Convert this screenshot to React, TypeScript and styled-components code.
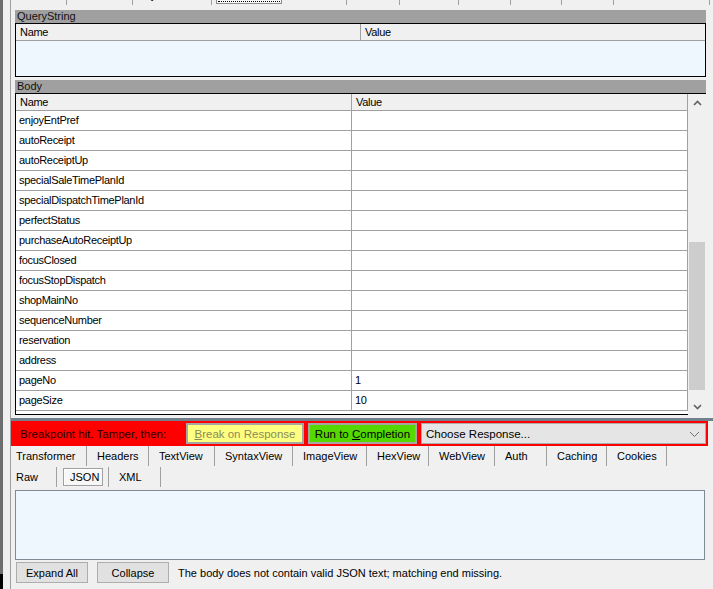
import React from 'react';
import styled, { createGlobalStyle } from 'styled-components';

const GlobalStyle = createGlobalStyle`
  html, body {
    margin: 0;
    padding: 0;
    background: #f0f0f0;
  }

  body {
    font-family: "Liberation Sans", Arial, sans-serif;
    font-size: 11px;
    color: #000;
  }
`;

type Tab = { label: string; width: number; selected?: boolean; first?: boolean };

const topTabs: Tab[] = [
  { label: 'Headers', width: 56 },
  { label: 'TextView', width: 66 },
  { label: 'SyntaxView', width: 79 },
  { label: 'WebForms', width: 72, selected: true },
  { label: 'HexView', width: 63 },
  { label: 'Auth', width: 53 },
  { label: 'Cookies', width: 59 },
  { label: 'Raw', width: 52 },
  { label: 'JSON', width: 51 },
  { label: 'XML', width: 52 },
  { label: '', width: 96 }
];

const responseTabs: Tab[] = [
  { label: 'Transformer', width: 76, first: true },
  { label: 'Headers', width: 62 },
  { label: 'TextView', width: 66 },
  { label: 'SyntaxView', width: 78 },
  { label: 'ImageView', width: 74 },
  { label: 'HexView', width: 62 },
  { label: 'WebView', width: 66 },
  { label: 'Auth', width: 52 },
  { label: 'Caching', width: 60 },
  { label: 'Cookies', width: 60 }
];

const viewTabs: Tab[] = [
  { label: 'Raw', width: 46, first: true },
  { label: 'JSON', width: 52, selected: true },
  { label: 'XML', width: 52 }
];

const bodyRows: [string, string][] = [
  ['enjoyEntPref', ''],
  ['autoReceipt', ''],
  ['autoReceiptUp', ''],
  ['specialSaleTimePlanId', ''],
  ['specialDispatchTimePlanId', ''],
  ['perfectStatus', ''],
  ['purchaseAutoReceiptUp', ''],
  ['focusClosed', ''],
  ['focusStopDispatch', ''],
  ['shopMainNo', ''],
  ['sequenceNumber', ''],
  ['reservation', ''],
  ['address', ''],
  ['pageNo', '1'],
  ['pageSize', '10']
];

const Frame = styled.div`
  display: flex;
  width: 713px;
  height: 589px;
  overflow: hidden;
  background: #f0f0f0;
`;

const LeftEdge = styled.div`
  display: flex;
  flex: 0 0 11px;
`;

const EdgeBar = styled.div`
  width: 3px;
  background: linear-gradient(#6e6e6e 0 574px, #000 574px);
`;

const EdgeGap = styled.div`
  width: 7px;
  background: #f0f0f0;
`;

const EdgeLine = styled.div`
  width: 1px;
  background: #a0a0a0;
`;

const Main = styled.div`
  display: flex;
  flex-direction: column;
  flex: 1;
  min-width: 0;
`;

const TopStrip = styled.div`
  height: 6px;
  overflow: hidden;
`;

const TopTabRow = styled.div`
  display: flex;
  margin-top: -15px;
`;

const TopTab = styled.div<{ $width: number; $selected?: boolean }>`
  flex: 0 0 ${p => p.$width}px;
  height: 20px;
  box-sizing: border-box;
  display: flex;
  align-items: center;
  justify-content: center;
  border-right: ${p => (p.$selected ? 'none' : '1px solid #a0a0a0')};
  padding: ${p => (p.$selected ? '0 2px 1px 4px' : '0')};
  white-space: nowrap;
`;

const SelectedFace = styled.div`
  flex: 1;
  align-self: stretch;
  display: flex;
  align-items: center;
  justify-content: center;
  border: 1px solid #8c8c8c;
  background: #f8f8f8;
  outline: 1px dotted #000;
  outline-offset: -3px;
`;

const Panel = styled.div`
  display: flex;
  flex-direction: column;
  padding: 4px 7px 0 4px;
`;

const SectionBar = styled.div<{ $gap?: number }>`
  height: 13px;
  line-height: 13px;
  margin-top: ${p => p.$gap ?? 0}px;
  padding-left: 2px;
  background: #a0a0a0;
  color: #111;
`;

const QueryBox = styled.div`
  display: flex;
  flex-direction: column;
  height: 54px;
  box-sizing: border-box;
  border: 1px solid #000;
  background: #eef6fe;
`;

const ColumnHeader = styled.div`
  display: flex;
  height: 17px;
  box-sizing: border-box;
  border-bottom: 1px solid #a0a0a0;
  background: #f0f0f0;
  letter-spacing: -0.3px;
`;

const HeaderCell = styled.div<{ $width?: number }>`
  ${p => (p.$width ? `flex: 0 0 ${p.$width}px; border-right: 1px solid #a0a0a0;` : 'flex: 1;')}
  box-sizing: border-box;
  line-height: 16px;
  padding-left: 4px;
`;

const BodyBox = styled.div`
  display: flex;
  height: 322px;
  box-sizing: border-box;
  border-top: 1px solid #000;
`;

const ListBox = styled.div`
  display: flex;
  flex-direction: column;
  flex: 1;
  border-left: 1px solid #000;
  border-bottom: 1px solid #000;
  background: #fff;
`;

const ListHeader = styled(ColumnHeader)`
  border-right: 1px solid #a0a0a0;
`;

const Row = styled.div`
  display: flex;
  height: 20px;
  box-sizing: border-box;
  border-bottom: 1px solid #a0a0a0;
  border-right: 1px solid #a0a0a0;
  letter-spacing: -0.3px;
`;

const Cell = styled.div<{ $width?: number }>`
  ${p => (p.$width ? `flex: 0 0 ${p.$width}px; border-right: 1px solid #a0a0a0;` : 'flex: 1;')}
  box-sizing: border-box;
  line-height: 19px;
  padding-left: 3px;
  white-space: nowrap;
`;

const ScrollBar = styled.div`
  display: flex;
  flex-direction: column;
  flex: 0 0 18px;
  background: #f0f0f0;
`;

const ScrollArrow = styled.div`
  display: flex;
  align-items: center;
  justify-content: center;
  height: 17px;
  color: #606060;
`;

const ScrollTrack = styled.div`
  display: flex;
  flex-direction: column;
  flex: 1;
  padding: 131px 1px 8px 1px;
`;

const ScrollThumb = styled.div`
  flex: 1;
  background: #cdcdcd;
`;

const Splitter = styled.div`
  height: 3px;
  margin-top: 3px;
  background: #72808e;
`;

const AlertBar = styled.div`
  display: flex;
  align-items: center;
  height: 25px;
  box-sizing: border-box;
  margin-right: 5px;
  padding: 2px 2px 2px 9px;
  background: #ff0000;
  font-size: 11.5px;
`;

const AlertLabel = styled.div`
  flex: 0 0 166px;
  color: #1e0000;
  white-space: nowrap;
`;

const ActionButton = styled.div<{ $fill: string; $muted?: boolean; $width: number }>`
  flex: 0 0 ${p => p.$width}px;
  height: 21px;
  box-sizing: border-box;
  margin-right: 4px;
  display: flex;
  align-items: center;
  justify-content: center;
  border: 2px solid #a6a6a6;
  background: ${p => p.$fill};
  color: ${p => (p.$muted ? '#8a8a5a' : '#000')};
  white-space: nowrap;

  u {
    text-decoration: underline;
  }
`;

const ResponseSelect = styled.div`
  flex: 1;
  height: 21px;
  box-sizing: border-box;
  display: flex;
  align-items: center;
  justify-content: space-between;
  padding: 0 5px 0 4px;
  border: 1px solid #acacac;
  background: #e5e5e5;
  color: #000;

  svg {
    color: #707070;
  }
`;

const TabRow = styled.div<{ $gap?: number }>`
  display: flex;
  height: 20px;
  margin-top: ${p => p.$gap ?? 0}px;
`;

const TabItem = styled.div<{ $width: number; $first?: boolean }>`
  flex: 0 0 ${p => p.$width}px;
  box-sizing: border-box;
  display: flex;
  align-items: center;
  padding-left: ${p => (p.$first ? 5 : 10)}px;
  border-right: 1px solid #a0a0a0;
  white-space: nowrap;
`;

const PressedTab = styled.div<{ $width: number }>`
  flex: 0 0 ${p => p.$width}px;
  box-sizing: border-box;
  display: flex;
  padding: 1px 5px 1px 6px;
  border-right: 1px solid #a0a0a0;
`;

const PressedFace = styled.div`
  flex: 1;
  display: flex;
  align-items: center;
  padding-left: 6px;
  border: 1px solid #a0a0a0;
  box-shadow: inset 1px 1px 0 #fff;
  background: #f7f7f7;
`;

const JsonView = styled.div`
  height: 70px;
  box-sizing: border-box;
  margin: 3px 8px 0 4px;
  border: 1px solid #7f8a96;
  background: #eef6fe;
`;

const Footer = styled.div`
  display: flex;
  align-items: center;
  height: 21px;
  margin: 2px 0 0 5px;
  gap: 9px;
`;

const PushButton = styled.div`
  flex: 0 0 72px;
  height: 21px;
  box-sizing: border-box;
  display: flex;
  align-items: center;
  justify-content: center;
  border: 1px solid #adadad;
  background: #e1e1e1;
`;

const StatusText = styled.div`
  white-space: nowrap;
`;

function Chevron ({ up, thin }: { up?: boolean; thin?: boolean }) {
  const w = thin ? 11 : 9;
  return (
    <svg width={w} height='6' viewBox={`0 0 ${w} 6`}>
      <path
        d={up
          ? `M1 5 L${w / 2} 1.5 L${w - 1} 5`
          : `M1 1 L${w / 2} ${thin ? 5.5 : 4.5} L${w - 1} 1`}
        fill='none'
        stroke='currentColor'
        strokeWidth={thin ? 1 : 1.6}
      />
    </svg>
  );
}

export default function App () {
  return (
    <Frame>
      <GlobalStyle />
      <LeftEdge>
        <EdgeBar />
        <EdgeGap />
        <EdgeLine />
      </LeftEdge>
      <Main>
        <TopStrip>
          <TopTabRow>
            {topTabs.map((t, i) => (
              <TopTab key={i} $width={t.width} $selected={t.selected}>
                {t.selected ? <SelectedFace>{t.label}</SelectedFace> : t.label}
              </TopTab>
            ))}
          </TopTabRow>
        </TopStrip>

        <Panel>
          <SectionBar>QueryString</SectionBar>
          <QueryBox>
            <ColumnHeader>
              <HeaderCell $width={345}>Name</HeaderCell>
              <HeaderCell>Value</HeaderCell>
            </ColumnHeader>
          </QueryBox>

          <SectionBar $gap={3}>Body</SectionBar>
          <BodyBox>
            <ListBox>
              <ListHeader>
                <HeaderCell $width={336}>Name</HeaderCell>
                <HeaderCell>Value</HeaderCell>
              </ListHeader>
              {bodyRows.map(([name, value]) => (
                <Row key={name}>
                  <Cell $width={336}>{name}</Cell>
                  <Cell>{value}</Cell>
                </Row>
              ))}
            </ListBox>
            <ScrollBar>
              <ScrollArrow><Chevron up /></ScrollArrow>
              <ScrollTrack>
                <ScrollThumb />
              </ScrollTrack>
              <ScrollArrow><Chevron /></ScrollArrow>
            </ScrollBar>
          </BodyBox>
        </Panel>

        <Splitter />

        <AlertBar>
          <AlertLabel>Breakpoint hit. Tamper, then:</AlertLabel>
          <ActionButton $fill='#ffff80' $muted $width={118}>
            <span><u>B</u>reak on Response</span>
          </ActionButton>
          <ActionButton $fill='#55d800' $width={109}>
            <span>Run to <u>C</u>ompletion</span>
          </ActionButton>
          <ResponseSelect>
            <span>Choose Response...</span>
            <Chevron thin />
          </ResponseSelect>
        </AlertBar>

        <TabRow>
          {responseTabs.map(t => (
            <TabItem key={t.label} $width={t.width} $first={t.first}>{t.label}</TabItem>
          ))}
        </TabRow>
        <TabRow $gap={1}>
          {viewTabs.map(t => (t.selected
            ? (
              <PressedTab key={t.label} $width={t.width}>
                <PressedFace>{t.label}</PressedFace>
              </PressedTab>
              )
            : <TabItem key={t.label} $width={t.width} $first={t.first}>{t.label}</TabItem>
          ))}
        </TabRow>

        <JsonView />

        <Footer>
          <PushButton>Expand All</PushButton>
          <PushButton>Collapse</PushButton>
          <StatusText>The body does not contain valid JSON text; matching end missing.</StatusText>
        </Footer>
      </Main>
    </Frame>
  );
}
